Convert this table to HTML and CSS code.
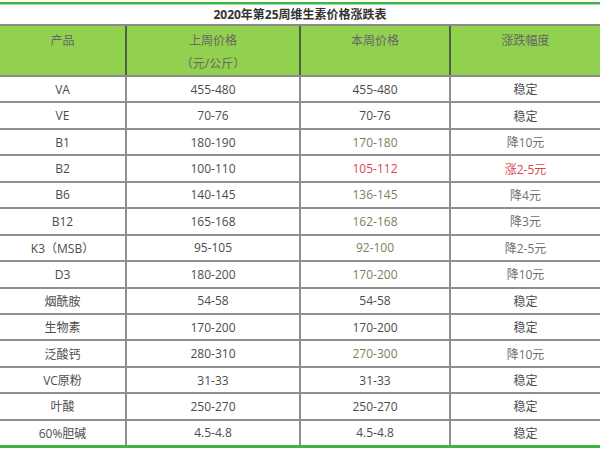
FILE: index.html
```html
<!DOCTYPE html>
<html lang="zh">
<head>
<meta charset="utf-8">
<title>2020年第25周维生素价格涨跌表</title>
<link rel="stylesheet" href="styles.css">
</head>
<body>
<div class="sheet">
  <div class="topline"></div>
  <div class="title">2020年第25周维生素价格涨跌表</div>
  <table class="prices">
    <colgroup>
      <col class="c1"><col class="c2"><col class="c3"><col class="c4">
    </colgroup>
    <thead>
      <tr>
        <th>产品</th>
        <th>上周价格<span class="unit">（元/公斤）</span></th>
        <th>本周价格</th>
        <th>涨跌幅度</th>
      </tr>
    </thead>
    <tbody>
      <tr><td>VA</td><td>455-480</td><td>455-480</td><td>稳定</td></tr>
      <tr><td>VE</td><td>70-76</td><td>70-76</td><td>稳定</td></tr>
      <tr><td>B1</td><td>180-190</td><td class="down">170-180</td><td class="downd">降10元</td></tr>
      <tr><td>B2</td><td>100-110</td><td class="up">105-112</td><td class="up">涨2-5元</td></tr>
      <tr><td>B6</td><td>140-145</td><td class="down">136-145</td><td class="downd">降4元</td></tr>
      <tr><td>B12</td><td>165-168</td><td class="down">162-168</td><td class="downd">降3元</td></tr>
      <tr><td>K3（MSB）</td><td>95-105</td><td class="down">92-100</td><td class="downd">降2-5元</td></tr>
      <tr><td>D3</td><td>180-200</td><td class="down">170-200</td><td class="downd">降10元</td></tr>
      <tr><td>烟酰胺</td><td>54-58</td><td>54-58</td><td>稳定</td></tr>
      <tr><td>生物素</td><td>170-200</td><td>170-200</td><td>稳定</td></tr>
      <tr><td>泛酸钙</td><td>280-310</td><td class="down">270-300</td><td class="downd">降10元</td></tr>
      <tr><td>VC原粉</td><td>31-33</td><td>31-33</td><td>稳定</td></tr>
      <tr><td>叶酸</td><td>250-270</td><td>250-270</td><td>稳定</td></tr>
      <tr><td>60%胆碱</td><td>4.5-4.8</td><td>4.5-4.8</td><td>稳定</td></tr>
    </tbody>
  </table>
</div>
</body>
</html>
```
FILE: styles.css
```css
html, body {
  margin: 0;
  padding: 0;
  background: #ffffff;
}
.sheet {
  width: 600px;
  padding-top: 2px;
  font-family: "Open Sans", "Noto Sans CJK SC", sans-serif;
  color: #4c4c4c;
}
.topline {
  height: 2px;
  background: #3fb43f;
  border-bottom: 1px solid #a8dca8;
}
.title {
  height: 19px;
  line-height: 19px;
  text-align: center;
  font-size: 12px;
  font-weight: bold;
  color: #333333;
}
.prices {
  width: 600px;
  border-collapse: collapse;
  table-layout: fixed;
  font-size: 12px;
  border-bottom: 3px solid #3fb43f;
}
.c1 { width: 126px; }
.c2 { width: 174px; }
.c3 { width: 150px; }
.c4 { width: 150px; }
.prices th {
  background: #92d050;
  color: #666666;
  font-weight: normal;
  height: 47px;
  vertical-align: top;
  padding: 2px 0 0 0;
  line-height: 25px;
  border-top: 2px solid #8a8a8a;
  border-bottom: 2px solid #8a8a8a;
  border-left: 2px solid #4f5f46;
  font-size: 12px;
}
.prices th:first-child { border-left: none; }
.unit {
  display: block;
  line-height: 22px;
}
.prices td {
  height: 24.45px;
  padding: 0;
  text-align: center;
  vertical-align: middle;
  border-bottom: 2px solid #8f8f8f;
  border-left: 2px solid #8f8f8f;
  color: #4c4c4c;
}
.prices td:first-child { border-left: none; }
.prices tbody tr:last-child td { border-bottom: none; }
.prices td.down { color: #7e7e5e; }
.prices td.downd { color: #6f6f6f; }
.prices td.up { color: #d8474f; }
```
